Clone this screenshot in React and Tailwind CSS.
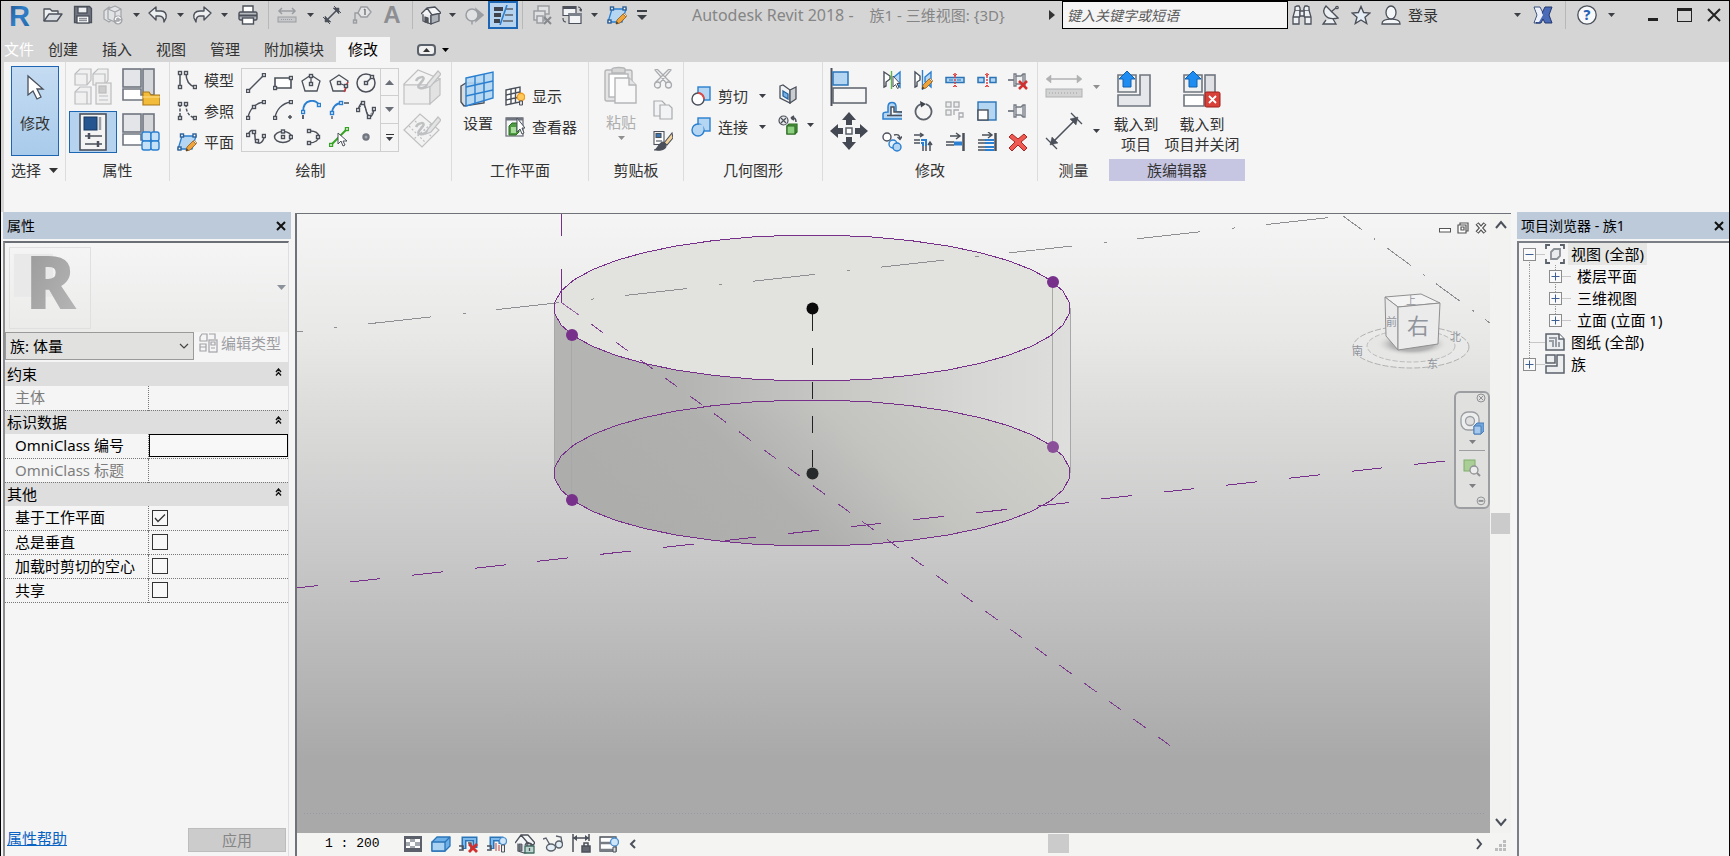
import { useState } from "react";

const DARK = "#4b505a";
const MID = "#8b8f96";
const BLUE = "#2a7fd0";
const SKY = "#b4d6f2";
const PURPLE = "#77318a";

const Dot = ({ x, y, c = DARK }) => (
  <rect x={x - 1.5} y={y - 1.5} width="3" height="3" fill="#fff" stroke={c} strokeWidth="1.4" />
);

const Pencil = ({ x = 0, y = 0 }) => (
  <g transform={`translate(${x} ${y})`}>
    <path d="M1 11l1-4 6-6 3 3-6 6z" fill="#f0a338" stroke="#8a5a1e" strokeWidth="0.8" />
    <path d="M8 1l1-1 3 3-1 1z" fill="#f3e0c8" stroke="#8a5a1e" strokeWidth="0.6" />
    <path d="M1 11l0.700-2.500 1.800 1.800z" fill="#333" />
  </g>
);

const PlaneShape = (
  <>
    <path d="M5 4h14l-4 13H1z" fill={SKY} stroke={BLUE} strokeWidth="1.3" />
    <Dot x={5} y={3.5} c="#2c5f96" />
    <Dot x={17.5} y={3.5} c="#2c5f96" />
    <Dot x={2.5} y={16.5} c="#2c5f96" />
    <Pencil x={8} y={8} />
  </>
);

const Pin = (
  <g fill="#f0f1f3" stroke="#747982" strokeWidth="1.3">
    <path d="M0 10h6" strokeWidth="1.8" />
    <path d="M6 4h2v2h5l2-2h2v12h-2l-2-2H8v2H6z" />
    <path d="M8 6v8M15 4v12" />
  </g>
);

const icons20 = {
  open: (
    <g stroke={DARK} strokeWidth="1.3" strokeLinejoin="round">
      <path d="M1 16V4h6l2 2h6v3" fill="#eef0f2" />
      <path d="M1 16l5-7h13l-5 7z" fill="#d7dbe0" />
    </g>
  ),
  save: (
    <g stroke={DARK} strokeWidth="1.3">
      <path d="M1.500 1.500h15l2 2v14h-17z" fill="#70757f" />
      <rect x="5" y="2" width="9" height="6" fill="#eceef0" />
      <rect x="4" y="11" width="12" height="7" fill="#fff" />
      <path d="M6 13.500h8M6 15.500h8" stroke={MID} />
    </g>
  ),
  sync: (
    <g stroke="#a0a3a8" strokeWidth="1.2" fill="#e2e3e4" strokeLinejoin="round">
      <path d="M1 6l5-4 5 2v9l-5 4-5-3z" />
      <path d="M5 4l7-3 6 3v8l-6 5-7-3z" />
      <path d="M5 4l7 3 6-3M12 7v9" fill="none" />
      <circle cx="15" cy="15" r="4" fill="#a9abaf" />
      <path d="M12.500 15a2.500 2.500 0 0 1 5-1M17.500 15.500a2.500 2.500 0 0 1-4 1.500" stroke="#fff" fill="none" />
    </g>
  ),
  undo: (
    <path d="M1 8l7-6v4h5c4 0 6 3 5 7l-2 4c0-4-1-6-5-6H8v4z" fill="#eceef0" stroke={DARK} strokeWidth="1.4" strokeLinejoin="round" />
  ),
  redo: (
    <path d="M19 8l-7-6v4H8c-5 0-7 3-6 7l2 4c0-4 1-6 4-6h4v4z" fill="#eceef0" stroke={DARK} strokeWidth="1.4" strokeLinejoin="round" />
  ),
  print: (
    <g stroke={DARK} strokeWidth="1.4">
      <path d="M5 7V1h10v6" fill="#fff" />
      <rect x="1" y="7" width="18" height="8" rx="1.5" fill="#b5b9bf" />
      <path d="M1 10.500h18" strokeWidth="2" />
      <rect x="4.500" y="13" width="11" height="6" fill="#fff" />
    </g>
  ),
  measure: (
    <g stroke="#9a9da2" strokeWidth="1.5" fill="none">
      <path d="M2 6h16M5 3L2 6l3 3M15 3l3 3-3 3" />
      <rect x="1" y="12" width="18" height="5" fill="#c6c7c9" strokeWidth="1" />
      <path d="M4 14.500h12" strokeDasharray="1 1" strokeWidth="1" />
    </g>
  ),
  dim: (
    <g stroke={DARK} strokeWidth="1.6" fill={DARK}>
      <path d="M4 16L16 4" />
      <path d="M3 17v-6l6 6zM17 3v6l-6-6z" strokeWidth="0.5" />
      <path d="M1 12l7 7M12 1l7 7" strokeWidth="1" />
    </g>
  ),
  tag: (
    <g stroke="#9a9da2" strokeWidth="1.4" fill="none">
      <path d="M9 2h6l4 5-4 5H9L6 8z" fill="#e4e5e6" />
      <path d="M13 4v6M12 5l1-1" stroke="#777" />
      <path d="M6 8H3v8" />
      <rect x="1.500" y="15" width="3" height="3" />
    </g>
  ),
  home: (
    <g stroke={DARK} strokeWidth="1.3" strokeLinejoin="round">
      <path d="M2 9v7l8 3V9" fill="#e8eaec" />
      <path d="M10 9l8-1v8l-8 3z" fill="#aeb2b9" />
      <path d="M0 9l6-6 5 7M6 3l8-1 6 6-9 2-5-7z" fill="#f4f5f6" />
      <path d="M4 12v5l3 1v-5z" fill="#555" />
    </g>
  ),
  section: (
    <g stroke="#9a9da2" strokeWidth="1.500" fill="none">
      <path d="M12 4l7 6-7 6z" fill="#9a9da2" />
      <circle cx="8" cy="10" r="6" fill="#e0e1e2" />
      <path d="M8 16v3.500" />
    </g>
  ),
  thin: (
    <g>
      <path d="M1 4h9M1 10h7" stroke="#3e434d" strokeWidth="4" />
      <path d="M1 16h6" stroke="#3e434d" strokeWidth="4" />
      <path d="M13 4h7M12 10h8M10 16h10" stroke="#5b616b" strokeWidth="1.600" />
      <path d="M14 0L7 20" stroke={BLUE} strokeWidth="1.6" />
    </g>
  ),
  closeWin: (
    <g stroke="#9a9da2" strokeWidth="1.5" fill="#e0e1e2">
      <path d="M6 1h11v8H6z" />
      <path d="M2 6h11v9H2z" />
      <path d="M5 11h6v7H5z" />
      <path d="M12 12l7 7M19 12l-7 7" stroke="#85888d" strokeWidth="2" />
    </g>
  ),
  switchWin: (
    <g stroke={DARK} strokeWidth="1.2" fill="#f3f4f5">
      <path d="M1 1.500h13v9H1z" />
      <path d="M1 2.500h13" strokeWidth="3" />
      <path d="M7 8.500h12v10H7z" />
      <path d="M7 9.500h12" strokeWidth="3" stroke="#7c828b" />
      <path d="M16 2c2 0 3 1 3 4M17.500 4.500L19 6l1-2M4 17c-2 0-3-1-3-4" fill="none" />
    </g>
  ),
  plane: PlaneShape,
  binoc: (
    <g stroke={DARK} strokeWidth="1.300" fill="#eef1f4">
      <path d="M3 5l-2 7v7h6v-6l1-2V5z" />
      <path d="M17 5l2 7v7h-6v-6l-1-2V5z" />
      <path d="M3 5V2l2-1h2l1 2v2M12 5V3l1-2h2l2 1v3M8 6h4v5H8zM1 12h6M13 12h6" />
    </g>
  ),
  satellite: (
    <g stroke={DARK} strokeWidth="1.300" fill="#eef1f4">
      <path d="M5 15l-3 4h13l-3-5" />
      <path d="M5 1C0 7 4 16 17 13z" />
      <path d="M10 7l6-5" />
      <circle cx="16" cy="2.500" r="1.200" />
    </g>
  ),
  star: <path d="M10 1.500l2.600 6 6.400.500-5 4.200 1.700 6.300L10 15l-5.700 3.500L6 12.200 1 8l6.400-.500z" fill="#e5eef6" stroke={DARK} strokeWidth="1.4" />,
  user: (
    <g stroke={DARK} strokeWidth="1.3" fill="#f4f6f8">
      <path d="M1 19c0-4 3-4 7-5h4c4 1 7 1 7 5z" />
      <ellipse cx="10" cy="7.500" rx="5" ry="6.500" />
    </g>
  ),
  exchange: (
    <g strokeLinejoin="round" strokeWidth="1">
      <path d="M1 2h6l4 8-4 8H1l3-8z" fill="#eef1fa" stroke="#39507f" />
      <path d="M12 2h7l-3 8 3 8h-7l-2-4-2 4H3l5-7 1-3 1-2z" fill="#4a6bb8" stroke="#23386e" />
      <path d="M2 3h4l4 7-4 7H2l3-7z" fill="#eef1fa" stroke="none" />
    </g>
  ),
  help: (
    <g>
      <circle cx="10" cy="10" r="9.200" fill="#f7f9fb" stroke={DARK} strokeWidth="1.300" />
      <text x="10" y="15" textAnchor="middle" fontSize="14" fontWeight="800" fill="#2b62b5">?</text>
    </g>
  ),
  model: (
    <g stroke={DARK} strokeWidth="1.500" fill="none">
      <path d="M3 3v14M9 3c0 7 2 12 9 14" />
      <Dot x={3} y={3} /><Dot x={3} y={17} /><Dot x={9} y={3} /><Dot x={18} y={17} />
    </g>
  ),
  refer: (
    <g stroke={DARK} strokeWidth="1.500" fill="none">
      <path d="M3 3v14M9 3c0 7 2 12 9 14" strokeDasharray="3 1.500" />
      <Dot x={3} y={3} /><Dot x={3} y={17} /><Dot x={9} y={3} /><Dot x={18} y={17} />
    </g>
  ),
  line: (
    <g><path d="M2 18L18 2" stroke={DARK} strokeWidth="1.500" /><Dot x={2} y={18} /><Dot x={18} y={2} /></g>
  ),
  rect: (
    <g><path d="M2 5h16v10H2z" fill="#fff" stroke={DARK} strokeWidth="1.600" /><Dot x={18} y={5} /><Dot x={2} y={15} /></g>
  ),
  polyIn: (
    <g stroke={DARK} strokeWidth="1.300" fill="none">
      <path d="M10 2l9 6-3 10H4L1 8z" /><path d="M10 3v7" /><Dot x={10} y={3} /><Dot x={10} y={11} />
    </g>
  ),
  polyOut: (
    <g stroke={DARK} strokeWidth="1.300" fill="none">
      <path d="M10 2l9 6-3 10H4L1 8z" /><path d="M10 10l7 3" /><path d="M19 9l-4 10" stroke="#e03030" /><Dot x={10} y={10} /><Dot x={17} y={13} />
    </g>
  ),
  circle: (
    <g stroke={DARK} strokeWidth="1.500" fill="none">
      <circle cx="10" cy="10" r="9" /><path d="M10 10l6-6" /><Dot x={10} y={10} /><Dot x={16} y={4} />
    </g>
  ),
  arc3: (
    <g><path d="M2 18C3 10 9 3 18 2" fill="none" stroke={DARK} strokeWidth="1.400" /><Dot x={2} y={18} /><Dot x={8} y={7} /><Dot x={18} y={2} /></g>
  ),
  arcC: (
    <g><path d="M2 18C3 10 9 3 18 2" fill="none" stroke={DARK} strokeWidth="1.400" /><Dot x={2} y={18} /><Dot x={18} y={2} /><path d="M17 15v4M15 17h4" stroke={DARK} strokeWidth="1.500" /></g>
  ),
  arcT: (
    <g fill="none" strokeWidth="1.800"><path d="M2 12C2-2 16-1 18 5" stroke={BLUE} /><path d="M2 15v4" stroke={DARK} /><Dot x={2} y={12} c={BLUE} /><Dot x={18} y={5} c={BLUE} /></g>
  ),
  fillet: (
    <g fill="none" strokeWidth="1.800"><path d="M3 14C3 7 7 3 13 3" stroke={BLUE} /><path d="M3 16v3M15 3h5" stroke={DARK} strokeWidth="1.300" /><Dot x={3} y={13} c={BLUE} /><Dot x={12} y={3} c={BLUE} /></g>
  ),
  spline: (
    <g fill="none" stroke={DARK} strokeWidth="1.400"><path d="M2 10C6-3 9 5 10 10s5 12 8 0" /><path d="M2 10l5-7 6 14 5-8" strokeWidth="0.800" strokeDasharray="2 1" /><Dot x={2} y={10} /><Dot x={7} y={3} /><Dot x={13} y={17} /><Dot x={18} y={9} /></g>
  ),
  splineP: (
    <g fill="none" stroke={DARK} strokeWidth="1.500"><path d="M2 8c3-7 7-5 7 2s6 9 9 1" /><Dot x={2} y={8} /><Dot x={8} y={5} /><Dot x={11} y={14} /><Dot x={18} y={9} /></g>
  ),
  ellipse: (
    <g fill="none" stroke={DARK} strokeWidth="1.500"><ellipse cx="10" cy="10" rx="8.500" ry="5.500" /><Dot x={10} y={10} /><Dot x={10} y={4.500} /><Dot x={18} y={10} /></g>
  ),
  ellipseP: (
    <g fill="none" stroke={DARK} strokeWidth="1.500"><path d="M8 4c13-1 13 12 0 12" /><Dot x={8} y={4} /><Dot x={8} y={16} /><Dot x={17} y={10} /></g>
  ),
  pick: (
    <g><path d="M2 18L18 2" stroke="#35a422" strokeWidth="2" /><Dot x={2} y={18} c="#35a422" /><Dot x={18} y={2} c="#35a422" /><path d="M9 6v11l3-3 2 5 2-1-2-4h4z" fill="#fff" stroke={DARK} /></g>
  ),
  point: <g><circle cx="10" cy="10" r="3.700" fill="#70757f" /><circle cx="10" cy="10" r="1.500" fill="#a5a9b0" /></g>,
  show: (
    <g fill="none" stroke={DARK} strokeWidth="1.400"><path d="M1 4l14-3v15L1 19z" fill="#fff" /><path d="M1 9l14-3M1 14l14-3M6 3v15M10.500 2v15" /><circle cx="16" cy="11" r="3.700" fill="#ffc95c" stroke="#f09a1c" /><path d="M14.500 15h3v4h-3z" fill="#ddd" strokeWidth="1" /></g>
  ),
  viewer: (
    <g><rect x="1" y="1" width="17" height="18" fill="#f4f5f6" stroke="#70757f" strokeWidth="1.300" /><path d="M1 2h17" stroke="#70757f" strokeWidth="3" /><path d="M4 9l3-3h7v9l-3 3H4z" fill="#4f9a42" stroke="#2c6b22" /><path d="M6 10h5v6H6z" fill="#a8dc9d" /><path d="M12 1v14l3-3 2 5 2-1-2-5h3z" fill="#fff" stroke={DARK} /></g>
  ),
  cut: (
    <g fill="#f2f3f4" stroke="#a9abae" strokeWidth="1.300"><path d="M2 1l2-1 13 13-3 2zM18 1l-2-1L3 13l3 2z" /><circle cx="4.500" cy="16" r="3" /><circle cx="15.500" cy="16" r="3" /></g>
  ),
  copy: (
    <g fill="#f2f3f4" stroke="#a9abae" strokeWidth="1.200"><path d="M1 1h8l3 3v12H1z" /><path d="M7 5h9l3 3v11H7z" /></g>
  ),
  match: (
    <g stroke={DARK} strokeWidth="1.100"><rect x="1" y="0.500" width="10" height="13" fill="#fff" /><rect x="3" y="2.500" width="5" height="4" fill="#3b77b5" /><path d="M3 10h6" /><path d="M11 12l8-10 1 5-6 7z" fill="#f0d29a" /><path d="M1 19c4 0 4-7 9-8 3 1 4 4 2 6-3 3-8 2-11 2z" fill="#4b505a" /></g>
  ),
  cutGeo: (
    <g strokeWidth="1.400"><rect x="7" y="1" width="12" height="13" fill={SKY} stroke={BLUE} /><circle cx="7" cy="13" r="6" fill="#fff" stroke={DARK} /><path d="M7 7a6 6 0 0 1 6 6" fill="none" stroke="#e04848" strokeWidth="1.800" /></g>
  ),
  join: (
    <g stroke={BLUE} strokeWidth="1.400" fill={SKY}><rect x="7" y="1" width="12" height="13" /><circle cx="7" cy="13" r="6" /><rect x="8" y="7.500" width="4.500" height="6" stroke="none" /></g>
  ),
  wallOpen: (
    <g strokeWidth="1.300" stroke={DARK} fill="#f2f3f5"><path d="M2 2l3-1 7 5v13l-10-5z" /><path d="M12 6l6-3v12l-6 4z" fill="#c9ccd1" /><path d="M5 7l5 3v5l-5-3z" fill="#78b2e6" stroke="#2563a0" /></g>
  ),
  split: (
    <g strokeWidth="1.200"><circle cx="5.500" cy="5.500" r="4.500" fill="#e6e7e9" stroke={DARK} /><path d="M3 3l5 5M8 3L3 8" stroke={DARK} /><path d="M13 3c4-1 5 1 5 4M13 3l3-2M13 3l3 2" fill="none" stroke={DARK} strokeWidth="1.600" /><path d="M9 11l2-2h8v8l-2 2H9z" fill="#4f9a42" stroke="#2c6b22" /><path d="M9 11h8v8H9z" fill="#8ccf7e" stroke="#2c6b22" /></g>
  ),
  mirror1: (
    <g strokeWidth="1.400"><path d="M2 2v15l2-1v-4l4-3V6z" fill="#fff" stroke={DARK} /><path d="M18 2v15l-6-6V7z" fill={SKY} stroke={BLUE} /><path d="M9.500 1v18" stroke="#5cb74a" /><path d="M11 6v11l2.500-2.500 2 4 1.500-1-2-4h3z" fill="#fff" stroke={DARK} strokeWidth="1" /></g>
  ),
  mirror2: (
    <g strokeWidth="1.400"><path d="M2 2v15l2-1v-4l3-2V6z" fill="#fff" stroke={DARK} /><path d="M18 2v15l-6-5V7z" fill={SKY} stroke={BLUE} /><path d="M9.500 0v20" stroke={BLUE} /><Pencil x={8} y={8} /></g>
  ),
  splitEl: (
    <g><rect x="1" y="7.500" width="18" height="5" fill={SKY} stroke="#2b74b8" strokeWidth="1.500" /><path d="M4 10h4M12 10h4" stroke="#2b74b8" /><path d="M10 3v14" stroke="#e04040" strokeWidth="1.500" strokeDasharray="2 1" /><path d="M8 4l2 2 2-2M8 17l2-2 2 2" fill="none" stroke="#e04040" /></g>
  ),
  splitGap: (
    <g><rect x="1" y="7.500" width="6" height="5" fill={SKY} stroke="#2b74b8" strokeWidth="1.500" /><rect x="13" y="7.500" width="6" height="5" fill={SKY} stroke="#2b74b8" strokeWidth="1.500" /><path d="M10 3v14" stroke="#e04040" strokeWidth="1.500" strokeDasharray="2 1" /><path d="M8 4l2 2 2-2M8 17l2-2 2 2" fill="none" stroke="#e04040" /></g>
  ),
  unpin: (
    <g>{Pin}<path d="M11 11l8 8M19 11l-8 8" stroke="#d22f2f" strokeWidth="2.500" /></g>
  ),
  pin: Pin,
  offset: (
    <g fill="none" strokeWidth="2"><path d="M20 18H1v-5c0-2 3-2 5-2V6c0-6 8-6 8 0v5h6" stroke={BLUE} strokeWidth="1.500" fill={SKY} /><path d="M20 14.500H5M9 14V6h3v5h8" stroke={DARK} strokeWidth="1.500" fill="#fff" /></g>
  ),
  rotate: (
    <g fill="none" stroke="#5b616b" strokeWidth="1.800"><path d="M8 3a8 8 0 1 0 5 0" /><path d="M7 0l6 3-5 3.500z" fill="#3e434d" stroke="none" /></g>
  ),
  array: (
    <g fill="#eee" stroke="#a9abae" strokeWidth="1.300"><rect x="1" y="1" width="5" height="5" /><rect x="9" y="1" width="5" height="5" /><rect x="1" y="9" width="5" height="5" /><path d="M9 14V9h5M14 19v-7h4v4h-4" fill="none" /></g>
  ),
  scale: (
    <g strokeWidth="1.400"><rect x="1" y="1" width="18" height="18" fill={SKY} stroke="#2b74b8" /><rect x="1" y="9" width="10" height="10" fill="#fff" stroke={DARK} /></g>
  ),
  copyEl: (
    <g strokeWidth="1.400"><circle cx="5" cy="5" r="4" fill="#fff" stroke={DARK} /><path d="M12 3c4-1 6 0 6 4M15.500 5l2.500 2.500 2-3" fill="none" stroke={DARK} /><circle cx="11" cy="12" r="4" fill="#e5f1fb" stroke={BLUE} /><circle cx="15" cy="15" r="4" fill={SKY} stroke={BLUE} /></g>
  ),
  trim: (
    <g strokeWidth="1.500" fill="none"><path d="M1 3h8M7 1l3 2-3 2M17 19v-8M15 13l2-3 2 3" stroke={DARK} /><path d="M1 8h6M1 11h6M10 14v5M13 14v5" stroke={DARK} /><path d="M8 8h5v6M8 11h2v3" stroke={BLUE} strokeWidth="2" /></g>
  ),
  extend: (
    <g strokeWidth="1.500" fill="none"><path d="M5 4h9M11 1l4 3-4 3" stroke={DARK} /><path d="M18.500 1v18" stroke={DARK} strokeWidth="2.500" /><path d="M1 10h8M1 13h8" stroke={DARK} /><path d="M9 11.500h8" stroke={BLUE} strokeWidth="4" /></g>
  ),
  extendM: (
    <g strokeWidth="1.400" fill="none"><path d="M5 3h9M11 0l4 3-4 3" stroke={DARK} /><path d="M18.500 1v18" stroke={DARK} strokeWidth="2.500" /><path d="M1 8h7M1 11h7M1 15h7M1 18h7" stroke={DARK} /><path d="M8 8h9M8 11h9M8 15h9M8 18h9" stroke={BLUE} strokeWidth="1.800" /></g>
  ),
  del: <path d="M4 2l6 5 6-5 3 3-6 5 6 6-3 3-6-6-6 6-3-3 6-6-6-5z" fill="#ee5a52" stroke="#a82522" strokeWidth="1" />,
  editType: (
    <g fill="none" stroke="#a2a2a8" strokeWidth="1.200"><path d="M1 4l2-3h5v7H1zM10 1h6v5M1 11h6v7H1zM1 14h6" /><rect x="10" y="7" width="8" height="12" /><path d="M12 9h4v3h-4zM12 15h4" /></g>
  ),
  detail: (
    <g><rect x="1" y="2" width="18" height="16" fill="#5b606a" /><path d="M3 5h4v3H3zM12 5h5v3h-5zM7 8h5v4H7zM3 12h4v2H3zM12 12h5v2h-5z" fill="#fff" /><path d="M3 8h4v4H3zM12 8h5v4h-5zM7 5h5v3H7zM7 12h5v2H7z" fill="#a3a7ae" /></g>
  ),
  style: (
    <g stroke="#2b74b8" strokeWidth="1.300" strokeLinejoin="round"><path d="M1 8l5-5h13v9l-5 5H1z" fill="#6db0e8" /><path d="M1 8h13v9H1z" fill="#a9d2f3" /><path d="M14 8l5-5" /></g>
  ),
  cropOff: (
    <g fill="none"><path d="M5 15V5h11v9" stroke="#2b74b8" strokeWidth="5" /><path d="M5 14V5h11v8" stroke="#7db9ea" strokeWidth="2" /><path d="M0 12h4v4H0M9 9h3v8" stroke={DARK} strokeWidth="1.500" /><path d="M10 10l8 8M18 10l-8 8" stroke="#d22f2f" strokeWidth="2.800" /></g>
  ),
  crop: (
    <g fill="none"><path d="M5 15V5h9v5" stroke="#2b74b8" strokeWidth="5" /><path d="M5 14V5h9v4" stroke="#7db9ea" strokeWidth="2" /><path d="M0 12h4v4H0" stroke={DARK} strokeWidth="1.500" /><path d="M9 9v8M12 11v6" stroke="#c04040" /><circle cx="16" cy="7" r="3.500" fill="#cfe6fa" stroke="#4b8fce" strokeWidth="1.200" /><path d="M14.500 11h3v7h-3z" fill="#eee" stroke={DARK} strokeWidth="1" /></g>
  ),
  lock3d: (
    <g stroke={DARK} strokeWidth="1.300" strokeLinejoin="round"><path d="M3 9v8l6 2 8-2V8z" fill="#dfe2e6" /><path d="M0 9l6-8 6 7-2 3M6 1h7l7 8-2 2-6-3z" fill="#f5f6f7" /><path d="M4 10h3v7H4z" fill="#777c85" strokeWidth="0.800" /><rect x="10" y="12" width="9" height="7" fill="#bcd6cf" stroke="#3f6a60" /><path d="M12 12V9.500h4V12" fill="none" /><path d="M14.500 14v3" /></g>
  ),
  glasses: (
    <g stroke="#5b616b" strokeWidth="1.400" fill="#e3eef7"><path d="M0 5l3-1 4 7M13 2l5 1 1 6" fill="none" /><ellipse cx="8" cy="13.500" rx="4.500" ry="3.500" /><ellipse cx="16" cy="10.500" rx="3.500" ry="3.500" /></g>
  ),
  reveal: (
    <g stroke={DARK} strokeWidth="1.500" fill="none"><path d="M2 0v18M18 0v7M2 4h16" /><path d="M2 4l4-3v6zM18 4l-4-3v6z" fill={DARK} strokeWidth="0" /><rect x="11" y="12" width="8" height="6" fill="#61666f" /><path d="M13 12V9h4v3" /></g>
  ),
  worksh: (
    <g strokeWidth="1.300"><path d="M1 3h16v14H1z" fill="#fff" stroke={DARK} /><path d="M1 9h14M1 16h14" stroke="#777c85" strokeWidth="2.500" /><circle cx="15.500" cy="8" r="4" fill="#cfe6fa" stroke="#4b8fce" /><path d="M14 13h3v5h-3z" fill="#ddd" stroke={DARK} strokeWidth="1" /></g>
  ),
  views: (
    <g fill="none" stroke="#5b616b" strokeWidth="1.800"><path d="M1 5V1h4M15 1h4v4M19 15v4h-4M5 19H1v-4" /><path d="M6 8l3-3h6v7l-3 3H6z" fill="#e9ebee" stroke={MID} /></g>
  ),
  sheets: (
    <g stroke="#5b616b" strokeWidth="1.500"><path d="M1 2h13l5 5v11H1z" fill="#eceef0" /><path d="M14 2v5h5" fill="#fff" /><path d="M4 6h7v9M4 9h4v6M14 10v5" fill="none" strokeWidth="2" stroke="#9a9ea6" /></g>
  ),
  family: (
    <g stroke="#5b616b" strokeWidth="1.500" fill="#eceef0"><path d="M1 1h9v8H1z" /><path d="M12 1h7v18H1v-7h11z" /></g>
  ),
};

const FamilyBlocks = ({ c = "#70757f" }) => (
  <g stroke={c} strokeWidth="1.600">
    <rect x="1" y="1" width="18" height="18" fill="#e4e5e8" />
    <rect x="21" y="1" width="11" height="26" fill="#d5d7db" />
    <path d="M1 21h18v6h4v5H1z" fill="#fff" />
  </g>
);

const Pen38 = ({ y = 0 }) => (
  <g transform={`translate(0 ${y})`} fill="none" stroke="#bfc0c2" strokeWidth="1.200">
    <path d="M13 13c2-5 10-5 7-1s-7 7-3 8 7-2 9-5" strokeWidth="2.500" />
    <path d="M25 15L35 3l3 3-10 12-5 2z" fill="#e4e4e4" />
  </g>
);

const icons38 = {
  cursor: <path d="M12 5v19l5-4 4 8 4-2-4-8h6z" fill="#fff" stroke={DARK} strokeWidth="1.300" />,
  typeProps: (
    <g stroke="#bcbdbf" strokeWidth="1.200" fill="#f0f0f0">
      <path d="M1 6l5-5h11v11l-4 5H1zM19 6l5-5h10v11l-3 5H19zM1 24l5-5h11v17H1z" />
      <path d="M1 6h12v11M19 6h12v11M1 24h12v12" fill="none" />
      <rect x="22" y="15" width="15" height="21" />
      <rect x="25" y="18" width="7" height="7" fill="#ccc" />
      <path d="M25 28h9M25 32h9" />
    </g>
  ),
  famTypes: (
    <g>
      <FamilyBlocks />
      <path d="M21 24h6l2 3h9v10H21z" fill="#f2bb3a" stroke="#a8791d" strokeWidth="1.200" />
      <path d="M21 29h17" stroke="#ffe08a" />
    </g>
  ),
  props: (
    <g>
      <rect x="6" y="1" width="26" height="36" fill="#f4f4f4" stroke={DARK} strokeWidth="1.600" />
      <rect x="10" y="4" width="13" height="13" fill="#27558f" stroke="#16365f" />
      <path d="M26 4v13" stroke="#9a9ea6" strokeWidth="2.500" />
      <path d="M11 23h17M11 31h17" stroke={DARK} strokeWidth="1.500" />
      <path d="M15 20v6M24 28v6" stroke={DARK} strokeWidth="2.500" />
    </g>
  ),
  categories: (
    <g>
      <FamilyBlocks />
      <g fill="#c5e1f7" stroke={BLUE} strokeWidth="1.400">
        <rect x="20" y="19" width="9" height="9" rx="2" /><rect x="29" y="19" width="8" height="9" rx="2" />
        <rect x="20" y="28" width="9" height="9" rx="2" /><rect x="29" y="28" width="8" height="9" rx="2" />
      </g>
    </g>
  ),
  faceDraw: (
    <g stroke="#bfc0c2" strokeWidth="1.200" fill="#efefef">
      <path d="M1 16L15 2l22 9-10 6H1z" fill="#f4f4f4" /><path d="M1 17h26v19H1z" /><path d="M27 17l10-6v16L27 36z" fill="#e2e2e2" />
      <Pen38 />
    </g>
  ),
  wpDraw: (
    <g stroke="#bfc0c2" strokeWidth="1.200" fill="#f2f2f2">
      <path d="M1 18L17 2l19 16-17 17z" /><path d="M6 14l17 17M12 9l17 16M28 12L11 27" strokeDasharray="2 2" />
      <Pen38 y={2} />
    </g>
  ),
  setPlane: (
    <g strokeWidth="1.400">
      <path d="M2 16l5-3h18v20L5 36l-3-4z" fill="#d9dbdf" stroke={DARK} />
      <path d="M7 8l27-6v26L7 36z" fill="#b4d6f2" fillOpacity="0.900" stroke={BLUE} />
      <path d="M7 17l27-6M7 26l27-6M16 6v28M25 4v27" stroke={BLUE} />
    </g>
  ),
  paste: (
    <g stroke="#b4b5b7" strokeWidth="1.400" fill="#e4e4e4">
      <rect x="3" y="4" width="27" height="31" rx="2" /><rect x="7" y="8" width="19" height="23" fill="#fff" />
      <path d="M10 3c0-2 13-2 13 0v4H10z" fill="#d5d5d5" />
      <path d="M13 12h14l7 7v18H13z" fill="#f8f8f8" /><path d="M27 12v7h7" />
    </g>
  ),
  align: (
    <g strokeWidth="1.500">
      <path d="M1.500 0v38" stroke={DARK} strokeWidth="2" />
      <rect x="3" y="4" width="15" height="13" fill={SKY} stroke="#2b74b8" />
      <rect x="3" y="20" width="33" height="15" fill="#f6f6f6" stroke="#5b616b" />
    </g>
  ),
  move: (
    <g fill="#434852">
      <path d="M19 0l7 8h-4v5h-6V8h-4zM19 38l7-8h-4v-5h-6v5h-4zM0 19l8-7v4h5v6H8v4zM38 19l-8-7v4h-5v6h5v4z" />
      <rect x="16" y="16" width="6" height="6" fill="#fff" stroke="#5b616b" strokeWidth="1.500" />
    </g>
  ),
  measureBig: (
    <g stroke="#b0b1b3" strokeWidth="1.500" fill="#b0b1b3">
      <path d="M3 12h32" /><path d="M1 12l5-4v8zM37 12l-5-4v8z" strokeWidth="0.500" />
      <rect x="1" y="22" width="36" height="8" fill="#d3d3d3" strokeWidth="1" /><path d="M4 26h30" strokeDasharray="1 2" />
    </g>
  ),
  dimBig: (
    <g stroke={DARK} strokeWidth="1.600" fill={DARK}>
      <path d="M8 30L30 8" /><path d="M5 33l2-8 6 6zM33 5l-8 2 6 6z" strokeWidth="0.500" />
      <path d="M1 26l11 11M26 1l11 11" strokeWidth="1.300" />
    </g>
  ),
  load: (
    <g>
      <path d="M23 5h10v31H1V25h22z" fill="#e6e7ea" stroke="#70757f" strokeWidth="1.600" />
      <path d="M1 5h18v17H1z" fill="#eef0f2" stroke="#70757f" strokeWidth="1.600" />
      <path d="M10 1l8 8h-4v8H6V9H2z" fill="#1e8cf0" stroke="#1160ae" strokeWidth="1" />
    </g>
  ),
  loadClose: (
    <g>
      <path d="M1 25h20v11H1z" fill="#fff" stroke="#70757f" strokeWidth="1.600" />
      <rect x="22" y="5" width="10" height="18" fill="#dfe1e4" stroke="#70757f" strokeWidth="1.600" />
      <path d="M1 5h18v17H1z" fill="#eef0f2" stroke="#70757f" strokeWidth="1.600" />
      <path d="M10 1l8 8h-4v8H6V9H2z" fill="#1e8cf0" stroke="#1160ae" strokeWidth="1" />
      <rect x="22" y="22" width="15" height="15" rx="1.500" fill="#d8403a" stroke="#9c1f1b" />
      <path d="M26 26l7 7M33 26l-7 7" stroke="#fff" strokeWidth="1.800" />
    </g>
  ),
};

const Icon = ({ name }) => (
  <svg className="h-5 w-5 shrink-0" viewBox="0 0 20 20" aria-hidden="true">
    {icons20[name]}
  </svg>
);

const BigIcon = ({ name }) => (
  <svg className="h-[38px] w-[38px] shrink-0" viewBox="0 0 38 38" aria-hidden="true">
    {icons38[name]}
  </svg>
);

const Caret = ({ className = "text-[#3c3f45]" }) => (
  <svg className={`h-1 w-[7px] ${className}`} viewBox="0 0 7 4" aria-hidden="true">
    <path d="M0 0h7L3.500 4z" fill="currentColor" />
  </svg>
);

const ToolButton = ({ icon, label, className = "w-5" }) => (
  <button type="button" aria-label={label} className={`flex items-center justify-center ${className}`}>
    <Icon name={icon} />
  </button>
);

const DropButton = ({ label, className = "w-4", caret }) => (
  <button type="button" aria-label={label} className={`flex h-5 items-center justify-center ${className}`}>
    <Caret className={caret} />
  </button>
);

const Divider = ({ className = "w-2" }) => (
  <span className={`flex justify-center ${className}`}>
    <span className="h-7 w-px bg-[#b8b8b8]" />
  </span>
);

const TitleBar = () => {
  const [query, setQuery] = useState("");

  return (
    <header className="flex h-8 items-center pb-1 text-[15px]">
      <div className="flex items-center">
        <button type="button" aria-label="R" className="flex w-[37px] justify-center">
          <svg className="h-7 w-6 overflow-visible" viewBox="0 0 24 28" aria-hidden="true">
            <defs>
              <linearGradient id="logo" x1="0" y1="0" x2="1" y2="1">
                <stop offset="0" stopColor="#1f4f86" />
                <stop offset="0.500" stopColor="#2f7fc9" />
                <stop offset="1" stopColor="#2563a6" />
              </linearGradient>
            </defs>
            <text x="1" y="25" fontSize="29" fontWeight="700" fill="url(#logo)" className="font-['Liberation_Sans',sans-serif]">R</text>
          </svg>
        </button>
        <ToolButton icon="open" label="打开" className="w-[30px]" />
        <ToolButton icon="save" label="保存" className="w-[30px]" />
        <ToolButton icon="sync" label="同步" className="w-[30px]" />
        <DropButton label="同步选项" />
        <ToolButton icon="undo" label="放弃" className="w-7" />
        <DropButton label="放弃列表" />
        <ToolButton icon="redo" label="重做" className="w-7" />
        <DropButton label="重做列表" />
        <ToolButton icon="print" label="打印" className="w-8" />
        <Divider />
        <ToolButton icon="measure" label="测量" className="w-[30px]" />
        <DropButton label="测量选项" />
        <ToolButton icon="dim" label="对齐尺寸标注" className="w-7" />
        <ToolButton icon="tag" label="按类别标记" className="w-8" />
        <button type="button" className="w-7 font-['Liberation_Sans',sans-serif] text-2xl leading-7 font-bold text-[#8c8e92]">A</button>
        <Divider className="w-3" />
        <ToolButton icon="home" label="默认三维视图" className="w-[26px]" />
        <DropButton label="三维视图选项" />
        <ToolButton icon="section" label="剖面" className="w-7" />
        <ToolButton icon="thin" label="细线" className="h-7 w-[30px] border-2 border-[#1c66b4] bg-[#b5d3ee]" />
        <Divider />
        <ToolButton icon="closeWin" label="关闭隐藏窗口" className="w-8" />
        <ToolButton icon="switchWin" label="切换窗口" className="w-7" />
        <DropButton label="窗口列表" />
        <ToolButton icon="plane" label="工作平面" className="w-[30px]" />
        <button type="button" aria-label="自定义" className="flex w-5 flex-col items-center gap-[3px]">
          <span className="h-[2px] w-[10px] bg-[#3c3f45]" />
          <svg className="h-[5px] w-[10px]" viewBox="0 0 10 5" aria-hidden="true"><path d="M0 0h10L5 5z" fill="#3c3f45" /></svg>
        </button>
      </div>
      <div className="ml-10 flex flex-1 items-center gap-4 whitespace-nowrap text-[#858585]">
        <span className="text-base">Autodesk Revit 2018 -</span>
        <span>族1 - 三维视图: {"{3D}"}</span>
      </div>
      <svg className="mr-[7px] h-[10px] w-[6px]" viewBox="0 0 6 10" aria-hidden="true"><path d="M0 0l6 5-6 5z" fill="#333" /></svg>
      <input
        type="text"
        aria-label="搜索"
        placeholder="键入关键字或短语"
        value={query}
        onChange={(e) => setQuery(e.target.value)}
        className="h-7 w-[226px] border border-black bg-[#f5f5f5] px-1 text-sm italic outline-none placeholder:text-[#5a5a5a]"
      />
      <div className="flex items-center">
        <ToolButton icon="binoc" label="搜索" className="w-7" />
        <ToolButton icon="satellite" label="通讯中心" className="w-[30px]" />
        <ToolButton icon="star" label="收藏夹" className="w-[30px]" />
        <ToolButton icon="user" label="账户" className="w-[30px]" />
        <button type="button" className="w-[103px] pl-[2px] text-left text-[#333]">登录</button>
        <DropButton label="账户选项" />
        <ToolButton icon="exchange" label="应用商店" className="w-9" />
        <Divider />
        <ToolButton icon="help" label="帮助" className="w-9" />
        <DropButton label="帮助选项" className="w-3" />
        <div className="ml-5 flex h-7 items-center">
          <button type="button" aria-label="最小化" className="flex w-8 justify-center pt-2"><span className="h-[3px] w-[10px] bg-[#222]" /></button>
          <button type="button" aria-label="最大化" className="flex w-[30px] justify-center"><span className="h-[14px] w-[15px] border border-t-[3px] border-[#222]" /></button>
          <button type="button" aria-label="关闭" className="flex w-[30px] justify-center">
            <svg className="h-[14px] w-[14px]" viewBox="0 0 14 14" aria-hidden="true"><path d="M1 1l12 12M13 1L1 13" stroke="#222" strokeWidth="2" /></svg>
          </button>
        </div>
      </div>
    </header>
  );
};

const TABS = ["创建", "插入", "视图", "管理", "附加模块", "修改"];

const TabBar = () => {
  const [active, setActive] = useState("修改");

  return (
    <nav className="flex h-[29px] items-end text-[15px] leading-[22px] text-[#333]">
      <button type="button" className="h-[25px] w-[35px] pb-[2px] pl-[3px] text-left text-white">文件</button>
      {TABS.map((tab) => (
        <button
          key={tab}
          type="button"
          onClick={() => setActive(tab)}
          className={"h-[25px] px-3 pb-[2px] " + (tab === active ? "bg-[#f5f5f5] text-black" : "")}
        >
          {tab}
        </button>
      ))}
      <button type="button" aria-label="最小化功能区" className="mb-[6px] ml-[27px] flex h-3 w-[19px] items-center justify-center rounded-sm border-2 border-[#5b616b] bg-[#f0f0f0]">
        <svg className="h-1 w-[7px]" viewBox="0 0 7 4" aria-hidden="true"><path d="M0 4h7L3.500 0z" fill="#333" /></svg>
      </button>
      <DropButton label="功能区选项" className="mb-[2px] w-[18px]" caret="text-black" />
    </nav>
  );
};

const Panel = ({ label, arrow, className = "", border = true, labelClass = "", children }) => (
  <section className={`flex shrink-0 flex-col ${border ? "border-r border-[#dcdcdc]" : ""} ${className}`}>
    <div className="flex h-[97px] items-start">{children}</div>
    <h2 className={`flex h-[22px] items-center justify-center gap-2 ${labelClass}`}>
      {label}
      {arrow && <svg className="h-[5px] w-[9px]" viewBox="0 0 9 5" aria-hidden="true"><path d="M0 0h9L4.500 5z" fill="#333" /></svg>}
    </h2>
  </section>
);

const TextTool = ({ icon, label }) => (
  <button type="button" className="flex h-[31px] items-center gap-[7px]">
    <Icon name={icon} />
    {label}
  </button>
);

const DRAW_TOOLS = [
  ["line", "线"], ["rect", "矩形"], ["polyIn", "内接多边形"], ["polyOut", "外接多边形"], ["circle", "圆形"],
  ["arc3", "起点-终点-半径弧"], ["arcC", "圆心-端点弧"], ["arcT", "相切-端点弧"], ["fillet", "圆角弧"], ["spline", "样条曲线"],
  ["splineP", "通过点的样条曲线"], ["ellipse", "椭圆"], ["ellipseP", "半椭圆"], ["pick", "拾取线"], ["point", "点图元"],
];

const MODIFY_TOOLS = [
  ["mirror1", "镜像-拾取轴"], ["mirror2", "镜像-绘制轴"], ["splitEl", "拆分图元"], ["splitGap", "用间隙拆分"], ["unpin", "解锁"],
  ["offset", "偏移"], ["rotate", "旋转"], ["array", "阵列"], ["scale", "缩放"], ["pin", "锁定"],
  ["copyEl", "复制"], ["trim", "修剪为角"], ["extend", "修剪单个图元"], ["extendM", "修剪多个图元"], ["del", "删除"],
];

const Ribbon = () => (
  <div className="ml-[3px] flex h-[150px] items-start bg-[#f5f5f5] text-[15px] leading-5 whitespace-nowrap text-[#333]">
    <Panel label="选择" arrow className="w-[62px]">
      <button type="button" className="mt-1 ml-[7px] flex h-[90px] w-12 flex-col items-center gap-1 border border-[#1c66b4] bg-linear-to-b from-[#c5dcf2] to-[#a9cbeb] pt-1">
        <BigIcon name="cursor" />
        修改
      </button>
    </Panel>

    <Panel label="属性" className="w-[104px]">
      <div className="grid grid-cols-[48px_48px] grid-rows-[44px_42px] gap-y-[2px] pt-[3px] pl-[3px]">
        <button type="button" aria-label="类型属性" className="flex items-center justify-center"><BigIcon name="typeProps" /></button>
        <button type="button" aria-label="族类型" className="flex items-center justify-center"><BigIcon name="famTypes" /></button>
        <button type="button" aria-label="属性" className="flex items-center justify-center border border-[#1c66b4] bg-[#b5d3ee]"><BigIcon name="props" /></button>
        <button type="button" aria-label="族类别" className="flex items-center justify-center"><BigIcon name="categories" /></button>
      </div>
    </Panel>

    <Panel label="绘制" className="w-[282px]">
      <div className="ml-[7px] flex w-16 flex-col pt-[2px]">
        <TextTool icon="model" label="模型" />
        <TextTool icon="refer" label="参照" />
        <TextTool icon="plane" label="平面" />
      </div>
      <div className="mt-[6px] flex h-[84px] w-[158px] border border-[#cfcfcf]">
        <div className="grid flex-1 grid-cols-5 grid-rows-3">
          {DRAW_TOOLS.map(([icon, label]) => (
            <ToolButton key={icon} icon={icon} label={label} className="" />
          ))}
        </div>
        <div className="grid w-[18px] grid-rows-3 divide-y divide-[#cfcfcf] border-l border-[#cfcfcf]">
          <button type="button" aria-label="上一行" className="flex items-center justify-center">
            <svg className="h-[5px] w-[9px]" viewBox="0 0 9 5" aria-hidden="true"><path d="M0 5h9L4.500 0z" fill="#6b6f78" /></svg>
          </button>
          <button type="button" aria-label="下一行" className="flex items-center justify-center">
            <svg className="h-[5px] w-[9px]" viewBox="0 0 9 5" aria-hidden="true"><path d="M0 0h9L4.500 5z" fill="#6b6f78" /></svg>
          </button>
          <button type="button" aria-label="展开" className="flex flex-col items-center justify-center gap-[2px]">
            <span className="h-px w-2 bg-[#333]" />
            <Caret />
          </button>
        </div>
      </div>
      <div className="ml-1 flex flex-col gap-[6px] pt-[6px]">
        <button type="button" aria-label="在面上绘制"><BigIcon name="faceDraw" /></button>
        <button type="button" aria-label="在工作平面上绘制"><BigIcon name="wpDraw" /></button>
      </div>
    </Panel>

    <Panel label="工作平面" className="w-[137px]">
      <button type="button" className="ml-[7px] flex w-[38px] flex-col items-center gap-[5px] pt-2">
        <BigIcon name="setPlane" />
        设置
      </button>
      <div className="ml-2 flex flex-col pt-[18px]">
        <TextTool icon="show" label="显示" />
        <TextTool icon="viewer" label="查看器" />
      </div>
    </Panel>

    <Panel label="剪贴板" className="w-[95px]">
      <button type="button" className="ml-3 flex w-10 flex-col items-center pt-1 text-[#aeaeae]">
        <BigIcon name="paste" />
        <span className="mt-2">粘贴</span>
        <Caret className="mt-1 text-[#8f8f8f]" />
      </button>
      <div className="ml-3 flex flex-col gap-[11px] pt-[7px]">
        <ToolButton icon="cut" label="剪切到剪贴板" />
        <ToolButton icon="copy" label="复制到剪贴板" />
        <ToolButton icon="match" label="匹配类型属性" />
      </div>
    </Panel>

    <Panel label="几何图形" className="w-[139px]">
      <div className="ml-[7px] flex flex-col pt-[18px]">
        <TextTool icon="cutGeo" label="剪切" />
        <TextTool icon="join" label="连接" />
      </div>
      <div className="ml-1 flex flex-col gap-[11px] pt-6">
        <DropButton label="剪切选项" className="w-5" />
        <DropButton label="连接选项" className="w-5" />
      </div>
      <div className="ml-[6px] flex flex-col gap-[11px] pt-[22px]">
        <ToolButton icon="wallOpen" label="墙洞口" />
        <div className="flex">
          <ToolButton icon="split" label="拆分面" />
          <DropButton label="拆分面选项" className="w-6" />
        </div>
      </div>
    </Panel>

    <Panel label="修改" className="w-[215px]">
      <div className="ml-[7px] flex flex-col gap-[6px] pt-[6px]">
        <button type="button" aria-label="对齐"><BigIcon name="align" /></button>
        <button type="button" aria-label="移动"><BigIcon name="move" /></button>
      </div>
      <div className="mt-[2px] ml-2 grid h-[93px] w-[158px] grid-cols-5 grid-rows-3">
        {MODIFY_TOOLS.map(([icon, label]) => (
          <ToolButton key={icon} icon={icon} label={label} className="" />
        ))}
      </div>
    </Panel>

    <Panel label="测量" className="w-[71px]" border={false}>
      <div className="ml-[7px] flex flex-col gap-[7px] pt-[5px]">
        <button type="button" aria-label="测量两个参照"><BigIcon name="measureBig" /></button>
        <button type="button" aria-label="尺寸标注"><BigIcon name="dimBig" /></button>
      </div>
      <div className="ml-[3px] flex flex-col gap-6 pt-[15px]">
        <DropButton label="测量选项" className="w-5" caret="text-[#8f8f8f]" />
        <DropButton label="标注选项" className="w-5" />
      </div>
    </Panel>

    <Panel label="族编辑器" className="w-[136px]" border={false} labelClass="bg-[#c6c6e2]">
      <button type="button" className="ml-1 flex w-[46px] flex-col items-center gap-[6px] pt-2">
        <BigIcon name="load" />
        <span>载入到<br />项目</span>
      </button>
      <button type="button" className="ml-1 flex w-[78px] flex-col items-center gap-[6px] pt-2">
        <BigIcon name="loadClose" />
        <span>载入到<br />项目并关闭</span>
      </button>
    </Panel>
  </div>
);

const PanelHeader = ({ title }) => (
  <div className="mb-[2px] flex h-[27px] items-center justify-between bg-[#bccada] pl-1 text-sm text-black">
    <h2>{title}</h2>
    <button type="button" aria-label="关闭" className="flex w-5 justify-center">
      <svg className="h-[10px] w-[10px]" viewBox="0 0 10 10" aria-hidden="true"><path d="M1 1l8 8M9 1L1 9" stroke="#111" strokeWidth="2" /></svg>
    </button>
  </div>
);

const GroupRow = ({ title }) => (
  <tr className="h-6 bg-[#dedede]">
    <th colSpan={2} scope="colgroup" className="px-[2px] text-left font-normal">
      <button type="button" className="flex w-full items-start justify-between">
        {title}
        <svg className="mt-1 mr-1 h-2 w-[7px]" viewBox="0 0 7 8" fill="none" aria-hidden="true">
          <path d="M1 4l2.500-3L6 4M1 7.500l2.500-3 2.500 3" stroke="#111" strokeWidth="1.400" />
        </svg>
      </button>
    </th>
  </tr>
);

const rowClass = "h-6 border-b border-dotted border-[#777]";
const keyClass = "border-r border-dotted border-[#777] pb-px pl-[10px] text-left font-normal whitespace-nowrap";

const CheckRow = ({ id, label, initial = false }) => {
  const [checked, setChecked] = useState(initial);

  return (
    <tr className={rowClass}>
      <th scope="row" className={keyClass}>
        <label htmlFor={id}>{label}</label>
      </th>
      <td className="pl-[3px]">
        <span className="relative block h-4 w-4">
          <input
            id={id}
            type="checkbox"
            checked={checked}
            onChange={() => setChecked(!checked)}
            className="block h-4 w-4 appearance-none border border-[#333] bg-[#f8f8f8]"
          />
          {checked && (
            <svg className="pointer-events-none absolute inset-0 h-4 w-4" viewBox="0 0 16 16" fill="none" aria-hidden="true">
              <path d="M3 8l3 3.500 7-7" stroke="#333" strokeWidth="1.300" />
            </svg>
          )}
        </span>
      </td>
    </tr>
  );
};

const Properties = () => (
  <aside className="ml-[2px] flex w-72 shrink-0 flex-col bg-[#f5f5f5]">
    <PanelHeader title="属性" />
    <div className="mr-[2px] flex flex-1 flex-col border-t-2 border-r border-l-2 border-t-[#6b6f75] border-r-[#dedede] border-l-[#8b8d90] text-[15px] text-black">
      <div className="flex h-[89px] items-center justify-between bg-linear-to-b from-[#f5f5f5] to-[#ebebea] pr-[2px] pl-1">
        <div className="h-[82px] w-[82px] border border-[#e0e0e0]">
          <svg className="h-full w-full overflow-visible" viewBox="0 0 82 82" aria-hidden="true">
            <defs>
              <linearGradient id="thumb" x1="0" y1="0" x2="1" y2="1">
                <stop offset="0" stopColor="#979797" />
                <stop offset="1" stopColor="#b9b9b9" />
              </linearGradient>
            </defs>
            <rect x="4" y="6" width="40" height="44" fill="#e9e9e9" />
            <text x="16" y="62" fontSize="76" fontWeight="800" fill="url(#thumb)" className="font-['Open_Sans',sans-serif]">R</text>
          </svg>
        </div>
        <button type="button" aria-label="类型选择器">
          <svg className="h-[5px] w-[9px]" viewBox="0 0 9 5" aria-hidden="true"><path d="M0 0h9L4.500 5z" fill="#8c929b" /></svg>
        </button>
      </div>
      <div className="flex h-[30px] items-start">
        <div className="relative">
          <select aria-label="族" className="block h-7 w-[189px] appearance-none border border-[#9a9a9a] bg-[#e1e1e0] pl-1 outline-none">
            <option>族: 体量</option>
          </select>
          <svg className="pointer-events-none absolute top-[11px] right-[5px] h-[6px] w-[10px]" viewBox="0 0 10 6" fill="none" aria-hidden="true">
            <path d="M1 1l4 4 4-4" stroke="#444" strokeWidth="1.200" />
          </svg>
        </div>
        <button type="button" className="ml-[5px] flex items-center gap-[2px] text-[#9d9da3]">
          <Icon name="editType" />
          编辑类型
        </button>
      </div>
      <table className="w-full table-fixed border-collapse leading-5">
        <colgroup>
          <col className="w-[143px]" />
          <col />
        </colgroup>
        <tbody>
          <GroupRow title="约束" />
          <tr className={rowClass}>
            <th scope="row" className={`${keyClass} text-[#7d7d7d]`}>主体</th>
            <td />
          </tr>
          <GroupRow title="标识数据" />
          <tr className={rowClass}>
            <th scope="row" className={keyClass}>
              <label htmlFor="omni">OmniClass 编号</label>
            </th>
            <td>
              <input id="omni" type="text" className="block h-[23px] w-full border border-black bg-[#f8f8f8] px-1 outline-none" />
            </td>
          </tr>
          <tr className={rowClass}>
            <th scope="row" className={`${keyClass} text-[#7d7d7d]`}>OmniClass 标题</th>
            <td />
          </tr>
          <GroupRow title="其他" />
          <CheckRow id="workplane" label="基于工作平面" initial />
          <CheckRow id="vertical" label="总是垂直" />
          <CheckRow id="voids" label="加载时剪切的空心" />
          <CheckRow id="shared" label="共享" />
        </tbody>
      </table>
      <div className="mt-auto mb-1 flex items-start justify-between px-[2px]">
        <a href="#help" className="leading-5 text-[#0a63c2] underline">属性帮助</a>
        <button type="button" className="h-6 w-[98px] border border-[#bdbdbd] bg-[#cccccc] text-[#858585]">应用</button>
      </div>
    </div>
  </aside>
);

// rings of the cylinder are faceted, like any tessellated edge
const ring = (cy) =>
  Array.from({ length: 40 }, (_, i) => {
    const a = ((i + 0.5) / 40) * Math.PI * 2;
    return `${(812 + 258 * Math.cos(a)).toFixed(1)},${(cy + 73 * Math.sin(a)).toFixed(1)}`;
  }).join(" ");

const ViewCube = () => (
  <g>
    <ellipse cx="1411" cy="347" rx="58" ry="21" fill="#eeeeed" fillOpacity="0.400" stroke="#b0b0b0" strokeDasharray="6 2" />
    <ellipse cx="1411" cy="346" rx="44" ry="16" fill="#e6e6e5" stroke="#bbbbbb" strokeDasharray="5 2" />
    <ellipse cx="1412" cy="344" rx="36" ry="12" fill="url(#shade)" />
    <path d="M1385 297l36-3 19 9-42 4z" fill="#f3f3f3" stroke="#8f8f8f" />
    <path d="M1385 297l13 10v43l-12-14z" fill="#e9e9ea" stroke="#8f8f8f" />
    <path d="M1398 307l42-4-2 41-40 6z" fill="#ebebec" stroke="#8f8f8f" />
    <g fill="#90949c" className="font-['Noto_Sans_CJK_SC',sans-serif]">
      <text x="1407" y="334" fontSize="22">右</text>
      <text x="1386" y="326" fontSize="11">前</text>
      <text x="1406" y="304" fontSize="10">上</text>
      <text x="1352" y="355" fontSize="11">南</text>
      <text x="1450" y="341" fontSize="11">北</text>
      <text x="1427" y="368" fontSize="11">东</text>
    </g>
  </g>
);

const Scene = () => (
  <svg className="h-full w-full" viewBox="297 214 1193 619" preserveAspectRatio="xMidYMid slice" role="img" aria-label="三维视图">
    <defs>
      <linearGradient id="sky" gradientUnits="userSpaceOnUse" x1="0" y1="214" x2="0" y2="833">
        <stop offset="0" stopColor="#f5f5f5" />
        <stop offset="0.200" stopColor="#e8e8e7" />
        <stop offset="0.320" stopColor="#dcdcdb" />
        <stop offset="0.540" stopColor="#c9c9c9" />
        <stop offset="0.880" stopColor="#a9a9a9" />
        <stop offset="1" stopColor="#a9a9a9" />
      </linearGradient>
      <linearGradient id="side" x1="0" y1="0" x2="1" y2="0">
        <stop offset="0" stopColor="#b4b4b3" />
        <stop offset="0.250" stopColor="#b4b4b3" />
        <stop offset="0.550" stopColor="#c8c8c5" />
        <stop offset="0.800" stopColor="#d6d6d4" />
        <stop offset="1" stopColor="#dededc" />
      </linearGradient>
      <linearGradient id="floor" x1="0" y1="0.300" x2="1" y2="0">
        <stop offset="0" stopColor="#adadac" />
        <stop offset="0.300" stopColor="#b0b0af" />
        <stop offset="0.550" stopColor="#c3c3c0" />
        <stop offset="0.850" stopColor="#cfcfca" />
        <stop offset="1" stopColor="#d2d2cf" />
      </linearGradient>
      <radialGradient id="shade">
        <stop offset="0" stopColor="#9f9f9f" />
        <stop offset="0.600" stopColor="#b5b5b5" />
        <stop offset="1" stopColor="#e6e6e5" stopOpacity="0" />
      </radialGradient>
    </defs>
    <rect x="-1000" y="214" width="4000" height="619" fill="url(#sky)" />
    <g shapeRendering="crispEdges">
      <path d="M554.500 308v165a257.500 73 0 0 0 515 0V308z" fill="url(#side)" />
      <polygon points={ring(473)} fill="url(#floor)" />
      <polygon points={ring(308)} fill="#e2e2de" />
      <g fill="none" stroke="#8d8f92">
        <path d="M240 338L1343 216" strokeDasharray="63 32 3 31" />
        <path d="M1343 216l147 107" strokeDasharray="23 15 2 14 30 15 2 14 30 15 2 14 30" />
      </g>
      <g fill="none" stroke="#a8a8a8">
        <path d="M554.500 308v165M1070.500 308v165M571.500 335v165M1052.500 281v165" />
      </g>
      <g fill="none" stroke={PURPLE}>
        <path d="M561.500 214v22M561.500 269v34" />
        <path d="M562 303l17 12" strokeOpacity="0.700" />
        <path d="M591 324l581 423" strokeDasharray="15 15.500" strokeOpacity="0.900" />
        <path d="M287 589L1490 456" strokeDasharray="31 32" />
        <polygon points={ring(473)} />
        <polygon points={ring(308)} />
      </g>
      <path d="M812.500 314v159" stroke="#222" strokeDasharray="17 17" />
    </g>
    <g fill={PURPLE}>
      <circle cx="572" cy="335" r="6" />
      <circle cx="1053" cy="282" r="6" />
      <circle cx="572" cy="500" r="6" />
      <circle cx="1053" cy="447" r="6" fill="#8a4f98" />
    </g>
    <circle cx="812.500" cy="308.500" r="6" fill="#0a0a0a" />
    <circle cx="812.500" cy="473.500" r="6" fill="#272a2a" />
    <path d="M304 813.500h1181" stroke="#9599a6" strokeDasharray="1 2" />
    <ViewCube />
  </svg>
);

const NavBar = () => (
  <div className="absolute top-[177px] right-0 flex h-[118px] w-9 flex-col items-center rounded-md border-2 border-[#9c9ea1] bg-[#e0e0df]">
    <button type="button" aria-label="关闭导航栏" className="mr-[2px] self-end">
      <svg className="block h-[10px] w-[10px]" viewBox="0 0 10 10" fill="none" stroke="#8f9194" aria-hidden="true"><circle cx="5" cy="5" r="4" /><path d="M3 3l4 4M7 3L3 7" /></svg>
    </button>
    <button type="button" aria-label="控制盘" className="mt-2">
      <svg className="block h-6 w-6" viewBox="0 0 24 24" aria-hidden="true">
        <rect x="1" y="1" width="18" height="18" rx="7" fill="#eceded" stroke="#9a9da2" strokeWidth="1.300" />
        <circle cx="10" cy="10" r="4.500" fill="#e0e0e0" stroke="#9a9da2" strokeWidth="1.300" />
        <path d="M14 15l3-3h7v8l-3 3h-7z" fill="#6fa5dc" stroke="#4a7db5" /><path d="M14 15h7v8h-7z" fill="#a5c8ec" stroke="#4a7db5" />
      </svg>
    </button>
    <button type="button" aria-label="控制盘选项" className="flex h-[15px] w-5 items-center justify-center">
      <Caret className="text-[#7d7f82]" />
    </button>
    <span className="h-px w-[26px] bg-[#9c9ea1]" />
    <button type="button" aria-label="区域放大" className="mt-2">
      <svg className="block h-[18px] w-[18px]" viewBox="0 0 18 18" fill="none" aria-hidden="true">
        <rect x="1" y="1" width="11" height="11" fill="#a9cf97" stroke="#7fae6b" />
        <circle cx="11" cy="11" r="4" fill="#ececec" stroke="#8f9194" strokeWidth="1.300" /><path d="M14 14l3 3" stroke="#8f9194" strokeWidth="2" />
      </svg>
    </button>
    <DropButton label="缩放选项" className="w-5" caret="text-[#7d7f82]" />
    <svg className="mt-auto mr-[2px] mb-px h-[10px] w-[10px] self-end" viewBox="0 0 10 10" fill="none" stroke="#8f9194" aria-hidden="true"><circle cx="5" cy="5" r="4" /><path d="M2.500 5h5" strokeWidth="2" /></svg>
  </div>
);

const Chevron = ({ d }) => (
  <svg className="block h-3 w-3" viewBox="0 0 12 12" fill="none" aria-hidden="true">
    <path d={d} stroke="#4b505a" strokeWidth="2" />
  </svg>
);

const VIEW_TOOLS = [
  ["detail", "详细程度"], ["style", "视觉样式"], ["cropOff", "裁剪视图"], ["crop", "显示裁剪区域"],
  ["lock3d", "锁定三维视图"], ["glasses", "临时隐藏/隔离"], ["reveal", "显示约束"], ["worksh", "预览可见性"],
];

const Viewport = () => (
  <main className="mt-px ml-1 flex min-w-0 flex-1 flex-col border-t border-l-2 border-[#6f7278]">
    <div className="flex min-h-0 flex-1">
      <div className="relative min-w-0 flex-1 overflow-hidden">
        <div className="absolute inset-0">
          <Scene />
        </div>
        <div className="absolute top-2 right-[3px] flex items-center gap-[6px]">
          <button type="button" aria-label="最小化视图"><svg className="block h-3 w-3" viewBox="0 0 12 12" aria-hidden="true"><rect x="0.500" y="6.500" width="11" height="3.500" fill="#fff" stroke="#555" /></svg></button>
          <button type="button" aria-label="还原视图"><svg className="block h-3 w-3" viewBox="0 0 12 12" fill="#fff" stroke="#555" strokeWidth="1.200" aria-hidden="true"><path d="M3 1h8v8H3z" /><path d="M1 3h8v8H1z" /><path d="M4 5h3v3H4z" /></svg></button>
          <button type="button" aria-label="关闭视图"><svg className="block h-3 w-3" viewBox="0 0 12 12" aria-hidden="true"><path d="M2 1.500l8 9M10 1.500l-8 9" stroke="#555" strokeWidth="4" /><path d="M2.500 2l7 8M9.500 2l-7 8" stroke="#fff" strokeWidth="1.300" /></svg></button>
        </div>
        <NavBar />
      </div>
      <div className="flex w-[21px] flex-col items-center bg-[#f2f2f1] py-[5px]">
        <button type="button" aria-label="向上滚动"><Chevron d="M1 9l5-6 5 6" /></button>
        <div className="mt-[282px] h-[21px] w-[19px] bg-[#cbcbcb]" />
        <button type="button" aria-label="向下滚动" className="mt-auto"><Chevron d="M1 3l5 6 5-6" /></button>
      </div>
    </div>
    <div className="flex h-[23px] items-center bg-[#f4f4f3] pb-[2px]">
      <span className="w-[102px] pl-7 font-['Liberation_Mono',monospace] text-[13px] whitespace-nowrap text-black">1 : 200</span>
      {VIEW_TOOLS.map(([icon, label]) => (
        <ToolButton key={icon} icon={icon} label={label} className="w-7" />
      ))}
      <button type="button" aria-label="向左滚动" className="ml-1"><Chevron d="M8 2L4 6l4 4" /></button>
      <div className="mx-1 flex h-full flex-1 items-center">
        <div className="ml-[49%] h-[19px] w-[21px] bg-[#cbcbcb]" />
      </div>
      <button type="button" aria-label="向右滚动" className="mr-[2px]"><Chevron d="M4 1l4 5-4 5" /></button>
      <svg className="mt-1 mr-1 ml-2 h-3 w-3" viewBox="0 0 12 12" fill="#bdbdbd" aria-hidden="true">
        <path d="M8 0h3v3H8zM4 4h3v3H4zM8 4h3v3H8zM0 8h3v3H0zM4 8h3v3H4zM8 8h3v3H8z" />
      </svg>
    </div>
  </main>
);

// one 26px step of the tree gutter: dotted connectors with an optional +/- box
const Gutter = ({ up, down, right, box }) => (
  <svg className="h-[22px] w-[26px] shrink-0" viewBox="0 0 26 22" fill="none" aria-hidden="true">
    <g stroke="#999" strokeDasharray="1 1">
      {up && <path d="M10.500 0v11" />}
      {down && <path d="M10.500 11v11" />}
      {right && <path d="M10.500 11.500H26" />}
    </g>
    {box && (
      <g>
        <rect x="4.500" y="5.500" width="12" height="12" fill="#fafafa" stroke="#8c8c8c" />
        <path d={box === "+" ? "M6.500 11.500h8M10.500 7.500v8" : "M6.500 11.500h8"} stroke="#3d5f93" />
      </g>
    )}
  </svg>
);

const LEVELS = ["楼层平面", "三维视图", "立面 (立面 1)"];

const Browser = () => (
  <aside className="ml-[6px] flex w-[212px] shrink-0 flex-col bg-[#f5f5f5]">
    <PanelHeader title="项目浏览器 - 族1" />
    <ul className="flex-1 border-t-2 border-l-2 border-[#7b7e84] text-[15px] leading-[22px] text-black">
      <li>
        <div className="flex">
          <Gutter down right box="-" />
          <span className="flex w-[23px] items-center"><Icon name="views" /></span>
          <span className="bg-[#e6e6e4] px-[3px]">视图 (全部)</span>
        </div>
        <ul>
          {LEVELS.map((name, i) => (
            <li key={name} className="flex">
              <Gutter up down />
              <Gutter up down={i < LEVELS.length - 1} right box="+" />
              <span className="pl-[6px]">{name}</span>
            </li>
          ))}
        </ul>
      </li>
      <li className="flex">
        <Gutter up down right />
        <span className="flex w-[26px] items-center"><Icon name="sheets" /></span>
        图纸 (全部)
      </li>
      <li className="flex">
        <Gutter up right box="+" />
        <span className="flex w-[26px] items-center"><Icon name="family" /></span>
        族
      </li>
    </ul>
  </aside>
);

export default function App() {
  return (
    <div className="flex h-screen min-h-[600px] flex-col overflow-hidden border-x border-t border-black bg-[#d5d5d5] font-['Noto_Sans','Noto_Sans_CJK_SC',sans-serif]">
      <TitleBar />
      <TabBar />
      <Ribbon />
      <div className="flex min-h-0 flex-1 bg-[#f5f5f5]">
        <Properties />
        <Viewport />
        <Browser />
      </div>
    </div>
  );
}
